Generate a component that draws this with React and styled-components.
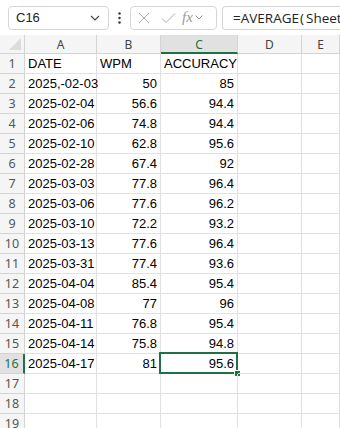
import React from 'react';
import styled, { createGlobalStyle } from 'styled-components';

const Global = createGlobalStyle`
  html, body { margin: 0; padding: 0; background: #fff; overflow: hidden; }
  body { font-family: "Liberation Sans", Arial, sans-serif; }
`;

const Page = styled.div`
  width: 340px;
  height: 428px;
  overflow: hidden;
  background: #fff;
`;

const Toolbar = styled.div`
  display: flex;
  align-items: center;
  height: 35px;
  padding: 0 0 0 8px;
  background: #fff;
`;

const Box = styled.div`
  display: flex;
  align-items: center;
  height: 24px;
  border: 1px solid #d6d6d6;
  border-radius: 4px;
  background: #fff;
  box-sizing: border-box;
  width: ${p => p.$w}px;
  flex-shrink: 0;
  padding: ${p => p.$pad || '0 6px'};
  overflow: hidden;
`;

const FormulaBox = styled(Box)`
  margin-left: 5px;
  border-right: none;
  border-radius: 4px 0 0 4px;
`;

const NameText = styled.span`
  font-size: 13px;
  color: #222;
  flex: 1;
`;

const Dots = styled.div`
  width: 21px;
  display: flex;
  justify-content: center;
  flex-shrink: 0;
`;

const Formula = styled.span`
  font-family: "Open Sans", sans-serif;
  font-size: 13.5px;
  color: #222;
  white-space: nowrap;
`;

const Paren = styled.span`
  padding: 0 2px 0 1px;
`;

const Fx = styled.span`
  font-family: "Liberation Serif", serif;
  font-style: italic;
  font-size: 15px;
  color: #9a9a9a;
  margin-left: 6px;
`;

const Grid = styled.div`
  display: grid;
  grid-template-columns: 25px 72px 64px 77px 64px 38px;
  grid-template-rows: 19px;
  grid-auto-rows: 20px;
`;

const Corner = styled.div`
  background: #f5f5f5;
  border-right: 1px solid #d4d4d4;
  border-bottom: 1px solid #d4d4d4;
  box-sizing: border-box;
  display: flex;
  align-items: flex-end;
  justify-content: flex-end;
  padding: 0 3px 3px 0;
`;

const ColHead = styled.div`
  background: ${p => (p.$active ? '#e1e1e1' : '#f5f5f5')};
  color: ${p => (p.$active ? '#1e7145' : '#444')};
  border-right: 1px solid #d4d4d4;
  border-bottom: ${p => (p.$active ? '2px solid #1e7145' : '1px solid #d4d4d4')};
  box-sizing: border-box;
  font-family: "Noto Sans", sans-serif;
  font-size: 12px;
  display: flex;
  align-items: center;
  justify-content: center;
  padding-top: ${p => (p.$active ? '1px' : '0')};
`;

const RowHead = styled.div`
  background: ${p => (p.$active ? '#e1e1e1' : '#f5f5f5')};
  color: ${p => (p.$active ? '#1e7145' : '#555')};
  border-right: ${p => (p.$active ? '2px solid #1e7145' : '1px solid #d4d4d4')};
  border-bottom: 1px solid #d4d4d4;
  box-sizing: border-box;
  font-family: "Noto Sans", sans-serif;
  font-size: 12.5px;
  display: flex;
  align-items: center;
  justify-content: center;
`;

const Cell = styled.div`
  position: relative;
  border-right: 1px solid #e1e1e1;
  border-bottom: 1px solid #e1e1e1;
  box-sizing: border-box;
  font-size: 13px;
  color: #000;
  display: flex;
  align-items: flex-end;
  justify-content: ${p => (p.$num ? 'flex-end' : 'flex-start')};
  padding: 0 3px 2px 3px;
  white-space: nowrap;
  line-height: 15px;
`;

const Selection = styled.div`
  position: absolute;
  left: -2px;
  top: -2px;
  right: -1px;
  bottom: -1px;
  border: 2px solid #1e7145;
  pointer-events: none;
  &::after {
    content: '';
    position: absolute;
    right: -5px;
    bottom: -5px;
    width: 5px;
    height: 5px;
    background: #1e7145;
    border: 1px solid #fff;
  }
`;

const data = [
  ['DATE', 'WPM', 'ACCURACY'],
  ['2025,-02-03', 50, 85],
  ['2025-02-04', 56.6, 94.4],
  ['2025-02-06', 74.8, 94.4],
  ['2025-02-10', 62.8, 95.6],
  ['2025-02-28', 67.4, 92],
  ['2025-03-03', 77.8, 96.4],
  ['2025-03-06', 77.6, 96.2],
  ['2025-03-10', 72.2, 93.2],
  ['2025-03-13', 77.6, 96.4],
  ['2025-03-31', 77.4, 93.6],
  ['2025-04-04', 85.4, 95.4],
  ['2025-04-08', 77, 96],
  ['2025-04-11', 76.8, 95.4],
  ['2025-04-14', 75.8, 94.8],
  ['2025-04-17', 81, 95.6],
  [], [], [], [],
];

const Chevron = () => (
  <svg width="10" height="6" viewBox="0 0 10 6" fill="none">
    <path d="M1 1l4 4 4-4" stroke="#444" strokeWidth="1.1" />
  </svg>
);

const App = () => (
  <Page>
    <Global />
    <Toolbar>
      <Box $w={101} $pad="0 8px 0 7px">
        <NameText>C16</NameText>
        <Chevron />
      </Box>
      <Dots>
        <svg width="3" height="12" viewBox="0 0 3 12">
          <circle cx="1.5" cy="1.5" r="1.2" fill="#333" />
          <circle cx="1.5" cy="6" r="1.2" fill="#333" />
          <circle cx="1.5" cy="10.5" r="1.2" fill="#333" />
        </svg>
      </Dots>
      <Box $w={87} $pad="0 4px 0 7px">
        <svg width="12" height="12" viewBox="0 0 12 12">
          <path d="M1 1l10 10M11 1L1 11" stroke="#aaa" strokeWidth="1" />
        </svg>
        <svg width="15" height="12" viewBox="0 0 15 12" style={{ marginLeft: 11 }}>
          <path d="M1 6.5l4 4L14 1.5" stroke="#aaa" strokeWidth="1" fill="none" />
        </svg>
        <Fx>fx</Fx>
        <svg width="8" height="5" viewBox="0 0 8 5" style={{ marginLeft: 2 }}>
          <path d="M0.5 0.5l3.5 3.5 3.5-3.5" stroke="#999" fill="none" />
        </svg>
      </Box>
      <FormulaBox $w={130} $pad="0 0 0 10px">
        <Formula>=AVERAGE<Paren>(</Paren>Sheet</Formula>
      </FormulaBox>
    </Toolbar>
    <Grid>
      <Corner>
        <svg width="12" height="12" viewBox="0 0 12 12">
          <path d="M12 0L12 12L0 12Z" fill="#dcdcdc" />
        </svg>
      </Corner>
      {['A', 'B', 'C', 'D', 'E'].map(c => (
        <ColHead key={c} $active={c === 'C'}>{c}</ColHead>
      ))}
      {data.map((row, i) => (
        <React.Fragment key={i}>
          <RowHead $active={i === 15}>{i + 1}</RowHead>
          <Cell>{row[0]}</Cell>
          <Cell $num={i > 0}>{row[1]}</Cell>
          <Cell $num={i > 0}>
            {row[2]}
            {i === 15 && <Selection />}
          </Cell>
          <Cell />
          <Cell />
        </React.Fragment>
      ))}
    </Grid>
  </Page>
);

export default App;
